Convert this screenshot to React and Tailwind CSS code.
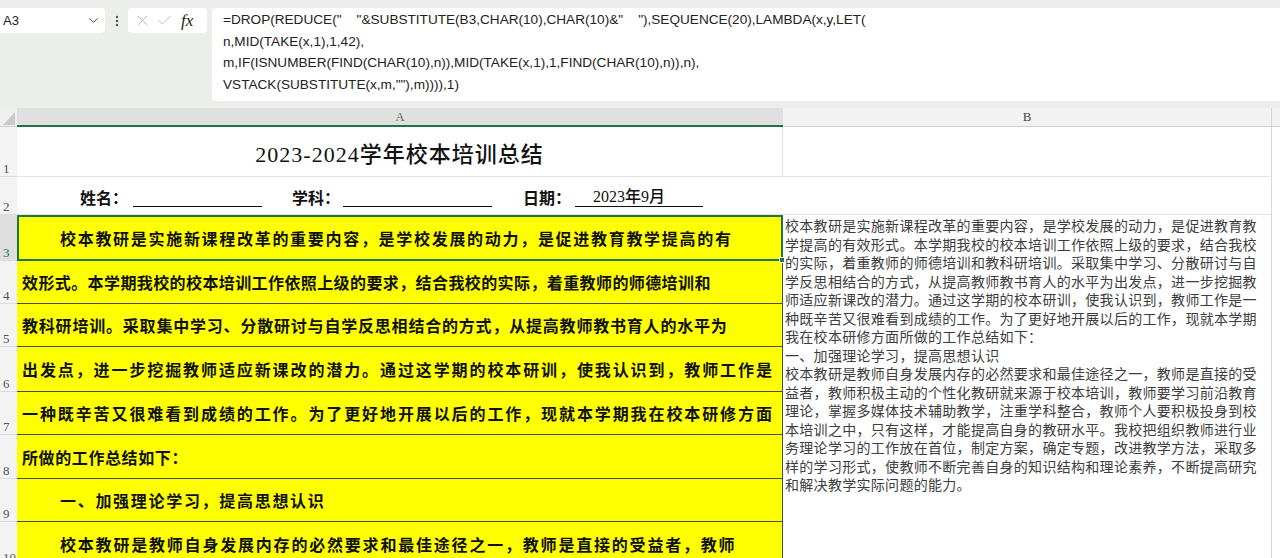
import React from "react";
import { ChevronDown, EllipsisVertical, X, Check } from "lucide-react";

const rowsA = [
  { h: "h-[46px]", n: "3", text: "校本教研是实施新课程改革的重要内容，是学校发展的动力，是促进教育教学提高的有", cls: "pl-[41px] tracking-[1.7px]", sel: true },
  { h: "h-[43px]", n: "4", text: "效形式。本学期我校的校本培训工作依照上级的要求，结合我校的实际，着重教师的师德培训和", cls: "pl-[4px] tracking-[0.4px]" },
  { h: "h-[43px]", n: "5", text: "教科研培训。采取集中学习、分散研讨与自学反思相结合的方式，从提高教师教书育人的水平为", cls: "pl-[4px] tracking-[0.8px]" },
  { h: "h-[45px]", n: "6", text: "出发点，进一步挖掘教师适应新课改的潜力。通过这学期的校本研训，使我认识到，教师工作是", cls: "pl-[4px] tracking-[1.9px]" },
  { h: "h-[43px]", n: "7", text: "一种既辛苦又很难看到成绩的工作。为了更好地开展以后的工作，现就本学期我在校本研修方面", cls: "pl-[4px] tracking-[1.9px]" },
  { h: "h-[44px]", n: "8", text: "所做的工作总结如下：", cls: "pl-[4px] tracking-[0.6px]" },
  { h: "h-[43px]", n: "9", text: "一、加强理论学习，提高思想认识", cls: "pl-[42px] tracking-[1.7px]" },
  { h: "h-[44px]", n: "10", text: "校本教研是教师自身发展内存的必然要求和最佳途径之一，教师是直接的受益者，教师", cls: "pl-[42px] tracking-[1.8px]" },
];

const linesB = [
  "校本教研是实施新课程改革的重要内容，是学校发展的动力，是促进教育教",
  "学提高的有效形式。本学期我校的校本培训工作依照上级的要求，结合我校",
  "的实际，着重教师的师德培训和教科研培训。采取集中学习、分散研讨与自",
  "学反思相结合的方式，从提高教师教书育人的水平为出发点，进一步挖掘教",
  "师适应新课改的潜力。通过这学期的校本研训，使我认识到，教师工作是一",
  "种既辛苦又很难看到成绩的工作。为了更好地开展以后的工作，现就本学期",
  "我在校本研修方面所做的工作总结如下：",
  "一、加强理论学习，提高思想认识",
  "校本教研是教师自身发展内存的必然要求和最佳途径之一，教师是直接的受",
  "益者，教师积极主动的个性化教研就来源于校本培训，教师要学习前沿教育",
  "理论，掌握多媒体技术辅助教学，注重学科整合，教师个人要积极投身到校",
  "本培训之中，只有这样，才能提高自身的教研水平。我校把组织教师进行业",
  "务理论学习的工作放在首位，制定方案，确定专题，改进教学方法，采取多",
  "样的学习形式，使教师不断完善自身的知识结构和理论素养，不断提高研究",
  "和解决教学实际问题的能力。",
];

const formula = [
  '=DROP(REDUCE("    "&SUBSTITUTE(B3,CHAR(10),CHAR(10)&"    "),SEQUENCE(20),LAMBDA(x,y,LET(',
  "n,MID(TAKE(x,1),1,42),",
  "m,IF(ISNUMBER(FIND(CHAR(10),n)),MID(TAKE(x,1),1,FIND(CHAR(10),n)),n),",
  'VSTACK(SUBSTITUTE(x,m,""),m)))),1)',
];

export default function App() {
  return (
    <div className="w-[1280px] h-[558px] overflow-hidden bg-[#eceeec] flex flex-col font-['Noto_Sans_CJK_SC',sans-serif]">
      {/* formula bar area */}
      <div className="flex items-start pt-[8px] h-[108px] shrink-0">
        <div className="w-[105px] h-[25px] bg-white rounded-r-[4px] flex items-center justify-between pl-[3px] pr-[4px]">
          <span className="text-[13px] text-[#222] font-['Liberation_Sans',sans-serif]">A3</span>
          <ChevronDown size={15} strokeWidth={1.6} className="text-[#444]" />
        </div>
        <div className="w-[23px] h-[25px] flex items-center justify-center">
          <EllipsisVertical size={14} strokeWidth={2.2} className="text-[#555]" />
        </div>
        <div className="w-[79px] h-[25px] bg-white rounded-[4px] flex items-center pl-[6px] gap-[5px]">
          <X size={17} strokeWidth={1.2} className="text-[#b0b0b0]" />
          <Check size={17} strokeWidth={1.2} className="text-[#b0b0b0]" />
          <span className="ml-[3px] text-[17px] italic text-[#222] font-['Liberation_Serif',serif] leading-none">fx</span>
        </div>
        <div className="ml-[5px] flex-1 h-[93px] bg-white rounded-l-[4px] pl-[11px] pt-[1px]">
          {formula.map((l, i) => (
            <div key={i} className="whitespace-pre text-[13.6px] leading-[21.7px] text-[#222] font-['Liberation_Sans',sans-serif]">{l}</div>
          ))}
        </div>
      </div>

      {/* sheet */}
      <div className="flex flex-1 bg-white">
        {/* row headers */}
        <div className="w-[17px] shrink-0 flex flex-col bg-[#f3f3f3] font-['Liberation_Serif',serif] text-[13px] text-[#555]">
          <div className="h-[19px] border-b border-[#cfcfcf] bg-[#efefef]">
            <svg width="17" height="19" className="block">
              <polygon points="15,4 15,17 3,17" fill="#c9c9c9" />
            </svg>
          </div>
          <div className="h-[50px] border-b border-[#dcdcdc] flex items-end pl-[3px] leading-[15px]">1</div>
          <div className="h-[38px] border-b border-[#dcdcdc] flex items-end pl-[3px] leading-[15px]">2</div>
          {rowsA.map((r) => (
            <div
              key={r.n}
              className={`${r.h} border-b border-[#dcdcdc] flex items-end pl-[3px] leading-[15px] ${r.sel ? "bg-[#dedede] text-[#217346]" : ""}`}
            >
              {r.n}
            </div>
          ))}
        </div>

        {/* column A */}
        <div className="w-[766px] shrink-0 flex flex-col">
          <div className="h-[19px] bg-[#e0e0e0] border-b-2 border-[#217346] flex items-center justify-center font-['Liberation_Serif',serif] text-[13px] text-[#4f7a5e]">
            A
          </div>
          <div className="h-[50px] border-b border-[#e3e3e3] border-r border-r-[#e3e3e3] flex items-center justify-center pt-[6px]">
            <span className="text-[22px] font-medium tracking-[1px] text-[#111] font-['Liberation_Serif','Noto_Sans_CJK_SC',serif]">
              2023-2024学年校本培训总结
            </span>
          </div>
          <div className="h-[38px] border-b border-[#e3e3e3] flex items-end pl-[63px] pb-[7px] text-[16px] font-bold text-[#111] leading-[20px]">
            <span>姓名：</span>
            <span className="ml-[5px] w-[129px] h-[20px] border-b border-[#111]"></span>
            <span className="ml-[30px]">学科：</span>
            <span className="ml-[3px] w-[149px] h-[20px] border-b border-[#111]"></span>
            <span className="ml-[31px]">日期：</span>
            <span className="ml-[4px] w-[128px] h-[20px] border-b border-[#111] pl-[18px] font-medium font-['Liberation_Serif','Noto_Sans_CJK_SC',serif]">
              2023年9月
            </span>
          </div>
          {rowsA.map((r) =>
            r.sel ? (
              <div key={r.n} className={`${r.h} relative bg-[#ffff00] border-2 border-[#217346] flex items-center`}>
                <span className={`${r.cls} whitespace-nowrap text-[16px] font-bold text-[#111]`}>{r.text}</span>
                <span className="absolute right-[-4px] bottom-[-4px] w-[6px] h-[6px] bg-[#217346] border border-white"></span>
              </div>
            ) : (
              <div key={r.n} className={`${r.h} bg-[#ffff00] border-b border-r border-[#4a4a4a] flex items-center pl-[1px]`}>
                <span className={`${r.cls} whitespace-nowrap text-[16px] font-bold text-[#111]`}>{r.text}</span>
              </div>
            )
          )}
        </div>

        {/* column B */}
        <div className="w-[489px] shrink-0 flex flex-col border-r border-[#d6d6d6]">
          <div className="h-[19px] bg-[#f2f2f2] border-b border-[#cfcfcf] flex items-center justify-center font-['Liberation_Serif',serif] text-[13px] text-[#444]">
            B
          </div>
          <div className="h-[50px] border-b border-[#e3e3e3]"></div>
          <div className="h-[38px] border-b border-[#e3e3e3]"></div>
          <div className="flex-1 pl-[2px] pt-[1px]">
            {linesB.map((l, i) => (
              <div key={i} className="whitespace-nowrap text-[14px] leading-[18.5px] tracking-[0.3px] text-[#3d3d3d]">
                {l}
              </div>
            ))}
          </div>
        </div>

        {/* column C */}
        <div className="flex-1 flex flex-col">
          <div className="h-[19px] bg-[#f2f2f2] border-b border-[#cfcfcf]"></div>
        </div>
      </div>
    </div>
  );
}
